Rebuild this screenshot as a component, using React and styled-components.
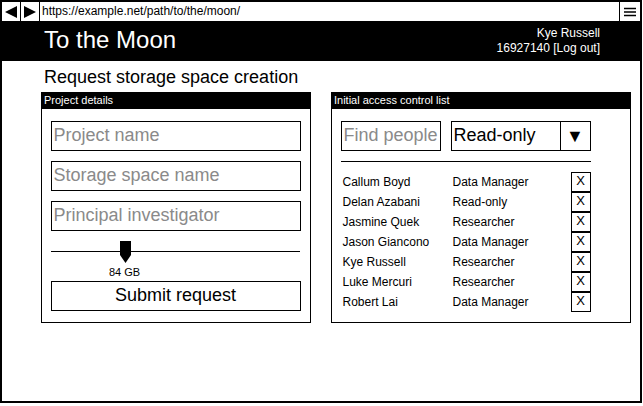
import React from 'react'
import styled, { createGlobalStyle } from 'styled-components'

const GlobalStyle = createGlobalStyle`
  html, body {
    margin: 0;
    padding: 0;
    background: #fff;
    font-family: "Liberation Sans", Arial, sans-serif;
  }
`

const people = [
  { name: 'Callum Boyd', role: 'Data Manager' },
  { name: 'Delan Azabani', role: 'Read-only' },
  { name: 'Jasmine Quek', role: 'Researcher' },
  { name: 'Jason Giancono', role: 'Data Manager' },
  { name: 'Kye Russell', role: 'Researcher' },
  { name: 'Luke Mercuri', role: 'Researcher' },
  { name: 'Robert Lai', role: 'Data Manager' },
]

const App = () => {
  return (
    <>
      <GlobalStyle />
      <Frame>
        <AddressBar>
          <NavButton>
            <svg width="12" height="12" viewBox="0 0 12 12">
              <path d="M0 6L12 0v12z" fill="#000" />
            </svg>
          </NavButton>
          <NavButton>
            <svg width="12" height="12" viewBox="0 0 12 12">
              <path d="M12 6L0 0v12z" fill="#000" />
            </svg>
          </NavButton>
          <Url>https://example.net/path/to/the/moon/</Url>
          <MenuButton>
            <svg width="12" height="10" viewBox="0 0 12 10">
              <path d="M0 1.5h12M0 5h12M0 8.5h12" stroke="#000" strokeWidth="1.4" />
            </svg>
          </MenuButton>
        </AddressBar>

        <Header>
          <Title>To the Moon</Title>
          <User>
            <div>Kye Russell</div>
            <div>16927140 [Log out]</div>
          </User>
        </Header>

        <Main>
          <Heading>Request storage space creation</Heading>
          <Panels>
            <Panel width={270}>
              <PanelTitle>Project details</PanelTitle>
              <PanelBody>
                <Field>Project name</Field>
                <Field>Storage space name</Field>
                <Field>Principal investigator</Field>
                <Slider>
                  <Track />
                  <Thumb style={{ left: 69 }}>
                    <svg width="11" height="22" viewBox="0 0 11 22">
                      <path d="M0 0h11v14L5.5 22L0 14z" fill="#000" />
                    </svg>
                  </Thumb>
                  <SliderValue style={{ left: 74 }}>84 GB</SliderValue>
                </Slider>
                <Button>Submit request</Button>
              </PanelBody>
            </Panel>

            <Panel width={300}>
              <PanelTitle>Initial access control list</PanelTitle>
              <PanelBody>
                <SearchRow>
                  <Field width={100}>Find people</Field>
                  <Select>
                    <SelectValue>Read-only</SelectValue>
                    <SelectArrow>▼</SelectArrow>
                  </Select>
                </SearchRow>
                <Divider />
                <List>
                  {people.map(({ name, role }) => (
                    <Person key={name}>
                      <Name>{name}</Name>
                      <Role>{role}</Role>
                      <Remove>X</Remove>
                    </Person>
                  ))}
                </List>
              </PanelBody>
            </Panel>
          </Panels>
        </Main>
      </Frame>
    </>
  )
}

export default App

const Frame = styled.div`
  width: 642px;
  height: 403px;
  box-sizing: border-box;
  border: 2px solid #000;
  display: flex;
  flex-direction: column;
  overflow: hidden;
`

const AddressBar = styled.div`
  height: 19px;
  display: flex;
  align-items: stretch;
`

const NavButton = styled.div`
  width: 18px;
  border-right: 1px solid #000;
  display: flex;
  align-items: center;
  justify-content: center;
`

const Url = styled.div`
  flex: 1;
  padding-left: 2px;
  font-size: 12px;
  line-height: 19px;
  color: #000;
`

const MenuButton = styled.div`
  width: 20px;
  border-left: 1px solid #000;
  display: flex;
  align-items: center;
  justify-content: center;
`

const Header = styled.div`
  height: 40px;
  background: #000;
  color: #fff;
  display: flex;
  align-items: center;
  justify-content: space-between;
  padding: 0 40px 0 42px;
`

const Title = styled.div`
  font-size: 24px;
  margin-top: -3px;
`

const User = styled.div`
  text-align: right;
  font-size: 12px;
  line-height: 15px;
`

const Main = styled.div`
  padding: 6px 0 0 39px;
`

const Heading = styled.div`
  font-size: 18px;
  line-height: 21px;
  margin: 0 0 4px 3px;
`

const Panels = styled.div`
  display: flex;
  gap: 20px;
`

const Panel = styled.div`
  width: ${p => p.width}px;
  height: 231px;
  box-sizing: border-box;
  border: 1.5px solid #000;
  display: flex;
  flex-direction: column;
`

const PanelTitle = styled.div`
  height: 16px;
  background: #000;
  color: #fff;
  font-size: 11px;
  line-height: 15px;
  padding-left: 2px;
`

const PanelBody = styled.div`
  padding: 12px 8px 0 8.5px;
  display: flex;
  flex-direction: column;
`

const Field = styled.div`
  width: ${p => p.width || 250}px;
  height: 30px;
  box-sizing: border-box;
  border: 1px solid #000;
  margin-bottom: 10px;
  padding-left: 2px;
  font-size: 18px;
  line-height: 27px;
  color: #8a8a8a;
  white-space: nowrap;
  overflow: hidden;
`

const Slider = styled.div`
  position: relative;
  height: 40px;
`

const Track = styled.div`
  position: absolute;
  left: 0;
  right: 2px;
  top: 10px;
  border-top: 1px solid #000;
`

const Thumb = styled.div`
  position: absolute;
  top: 0;
  line-height: 0;
`

const SliderValue = styled.div`
  position: absolute;
  top: 25px;
  transform: translateX(-50%);
  font-size: 11px;
  line-height: 13px;
`

const Button = styled.div`
  width: 250px;
  height: 30px;
  box-sizing: border-box;
  border: 1px solid #000;
  text-align: center;
  font-size: 18px;
  line-height: 27px;
`

const SearchRow = styled.div`
  display: flex;
  gap: 10px;
`

const Select = styled.div`
  width: 140px;
  height: 30px;
  box-sizing: border-box;
  border: 1px solid #000;
  display: flex;
`

const SelectValue = styled.div`
  flex: 1;
  padding-left: 2px;
  font-size: 18px;
  line-height: 27px;
`

const SelectArrow = styled.div`
  width: 29px;
  border-left: 1px solid #000;
  display: flex;
  align-items: center;
  justify-content: center;
  font-size: 18px;
`

const Divider = styled.div`
  width: 250px;
  border-top: 1px solid #000;
  margin-bottom: 10px;
`

const List = styled.div`
  display: flex;
  flex-direction: column;
`

const Person = styled.div`
  width: 250px;
  height: 20px;
  display: flex;
  align-items: center;
  font-size: 12px;
`

const Name = styled.div`
  width: 110px;
  padding-left: 2px;
`

const Role = styled.div`
  flex: 1;
`

const Remove = styled.div`
  width: 20px;
  height: 20px;
  box-sizing: border-box;
  border: 1px solid #000;
  margin-top: -1px;
  text-align: center;
  font-size: 13px;
  line-height: 16px;
`
